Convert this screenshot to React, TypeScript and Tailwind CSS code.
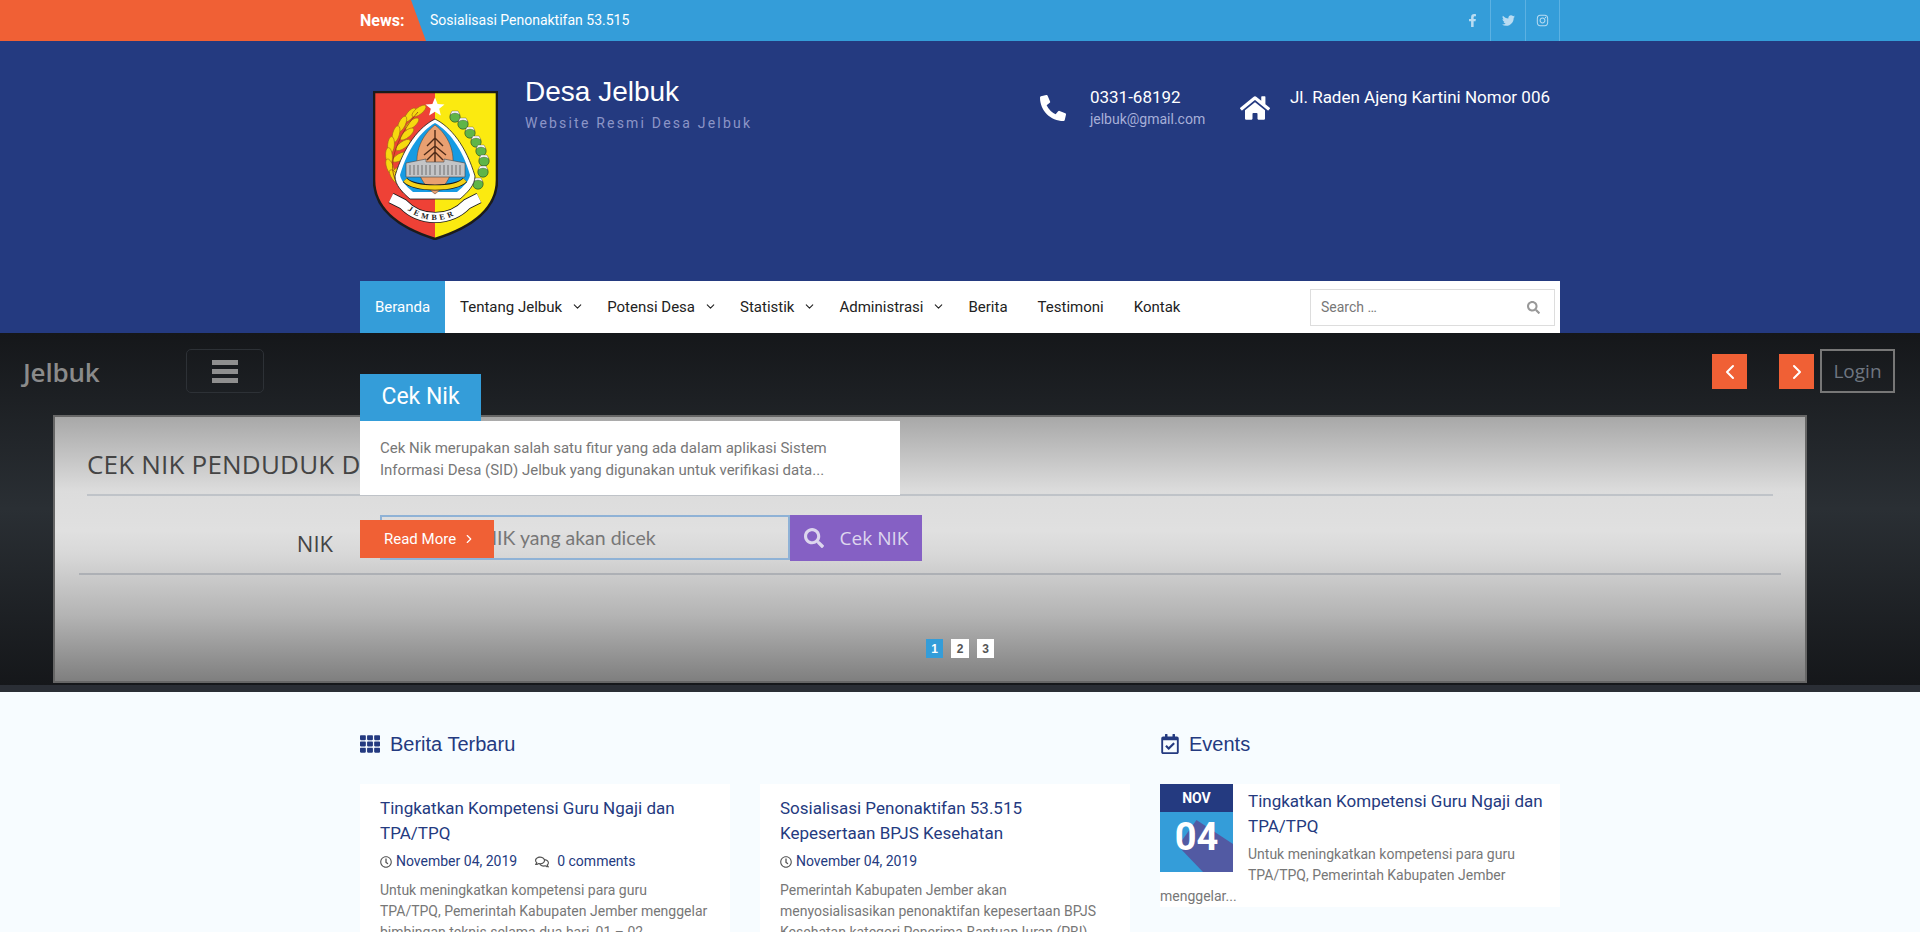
import { FaFacebookF, FaTwitter, FaInstagram, FaPhoneAlt, FaHome, FaTh, FaRegCalendarCheck, FaRegClock, FaRegComments, FaSearch } from "react-icons/fa";
import { FiChevronDown, FiChevronLeft, FiChevronRight } from "react-icons/fi";

const NAV = [
  { label: "Tentang Jelbuk", sub: true },
  { label: "Potensi Desa", sub: true },
  { label: "Statistik", sub: true },
  { label: "Administrasi", sub: true },
  { label: "Berita" },
  { label: "Testimoni" },
  { label: "Kontak" },
];

const POSTS = [
  {
    title: "Tingkatkan Kompetensi Guru Ngaji dan TPA/TPQ",
    comments: true,
    text: "Untuk meningkatkan kompetensi para guru TPA/TPQ, Pemerintah Kabupaten Jember menggelar bimbingan teknis selama dua hari, 01 – 02 November 2019 di Pendopo",
  },
  {
    title: "Sosialisasi Penonaktifan 53.515 Kepesertaan BPJS Kesehatan",
    comments: false,
    text: "Pemerintah Kabupaten Jember akan menyosialisasikan penonaktifan kepesertaan BPJS Kesehatan kategori Penerima Bantuan Iuran (PBI) yang bersumber dari APBD Jember",
  },
];

// lambang kabupaten, digambar kasar mengikuti referensi
function Logo() {
  const wheat = [
    [50, 35, 38], [59, 31, 52], [42, 44, 25], [52, 44, 50], [36, 54, 15], [47, 54, 50],
    [31, 65, 5], [43, 65, 55], [29, 76, -5], [40, 77, 60], [30, 87, -20], [40, 90, 65], [35, 97, -35],
  ];
  const cotton = [[95, 37], [103, 44], [110, 53], [116, 62], [121, 71], [124, 81], [123, 92], [118, 104]];
  return (
    <svg width="125" height="149" viewBox="13 11 125 149" className="shrink-0">
      <path d="M75 12H14V100C14 130 40 148 75 159Z" fill="#ee4136" />
      <path d="M75 12H137V100C137 130 110 148 75 159Z" fill="#fbea10" />
      <path d="M14 12H137V100C137 130 110 148 75 159C40 148 14 130 14 100Z" fill="none" stroke="#1b1b1b" strokeWidth="2.6" />
      <polygon points="75,17.5 77.6,24 84.5,24.4 79.2,28.8 80.9,35.5 75,31.8 69.1,35.5 70.8,28.8 65.5,24.4 72.4,24" fill="#fff" />
      {wheat.map(([x, y, r], i) => (
        <ellipse key={i} cx={x} cy={y} rx="3.4" ry="8.5" transform={`rotate(${r} ${x} ${y})`} fill="#f6d90f" stroke="#a3611a" strokeWidth="0.6" />
      ))}
      <path d="M58 32C42 50 30 75 33 92C35 103 40 108 43 113" fill="none" stroke="#8d3a14" strokeWidth="0.8" />
      {cotton.map(([x, y], i) => (
        <g key={i}>
          <circle cx={x} cy={y} r="5.2" fill="#5fb548" stroke="#24451d" strokeWidth="0.6" />
          <path d={`M${x - 5} ${y - 2}Q${x} ${y - 6} ${x + 5} ${y - 2}L${x + 3} ${y - 6}H${x - 3}Z`} fill="#fff" stroke="#444" strokeWidth="0.4" />
        </g>
      ))}
      <path d="M75 39C91 47 106 66 115 96C115 105 108 112 100 119H50C42 112 35 105 35 96C44 66 59 47 75 39Z" fill="#fff" stroke="#1b1b1b" strokeWidth="0.8" />
      <path d="M75 43C89 51 102 68 110 95C109 101 104 106 97 112H53C46 106 41 101 40 95C48 68 61 51 75 43Z" fill="#169be3" />
      <path d="M75 45C88 55 96 72 92 90C88 104 80 110 75 114C70 110 62 104 58 90C54 72 62 55 75 45Z" fill="#e9a071" stroke="#5a3a22" strokeWidth="0.5" />
      <path d="M75 50V84M75 58L67 66M75 58L83 66M75 66L64 75M75 66L86 75M75 72L67 80M75 72L83 80" stroke="#4d2a18" strokeWidth="1.4" fill="none" />
      <path d="M46 83L66 79V82H84V79L105 83V97H46Z" fill="#c3c4c6" stroke="#444" strokeWidth="0.6" />
      <path d="M50 85V95M54 85V95M58 85V95M62 85V95M66 85V95M70 85V95M75 85V95M80 85V95M84 85V95M88 85V95M92 85V95M96 85V95M100 85V95" stroke="#6e6e70" strokeWidth="1" />
      <path d="M45 100C55 110 95 110 105 100" fill="none" stroke="#1b1b1b" strokeWidth="6" />
      <path d="M45 100C55 110 95 110 105 100" fill="none" stroke="#f3d21a" strokeWidth="4.4" />
      <path d="M31 118L43 124C60 142 90 142 107 124L119 118" fill="none" stroke="#1b1b1b" strokeWidth="11" />
      <path d="M31 118L43 124C60 142 90 142 107 124L119 118" fill="none" stroke="#fff" strokeWidth="9.4" />
      <path id="jalur" d="M45 128C62 144 88 144 105 128" fill="none" />
      <text fontFamily="'Liberation Serif', serif" fontSize="8" fontWeight="700" letterSpacing="3.2" fill="#222">
        <textPath href="#jalur" startOffset="3">JEMBER</textPath>
      </text>
    </svg>
  );
}

export default function App() {
  return (
    <div className="h-screen overflow-hidden bg-[#f7fcff] font-['Roboto',sans-serif] text-[14px] text-[#777]">
      {/* News bar */}
      <div className="relative h-[41px] bg-[#349dd9]">
        <div className="absolute inset-y-0 left-0 w-[426px] bg-[#f06035] [clip-path:polygon(0_0,411px_0,426px_100%,0_100%)]" />
        <div className="relative mx-auto flex h-full w-[1200px] items-center">
          <span className="w-[70px] text-[16px] font-bold text-white">News:</span>
          <span className="text-white">Sosialisasi Penonaktifan 53.515</span>
          <div className="ml-auto flex h-full text-[13px] text-[#b9dcf2]">
            <span className="flex w-[35px] items-center justify-center"><FaFacebookF /></span>
            <span className="flex w-[35px] items-center justify-center border-l border-[#5cb1e2]"><FaTwitter /></span>
            <span className="flex w-[35px] items-center justify-center border-x border-[#5cb1e2]"><FaInstagram /></span>
          </div>
        </div>
      </div>

      {/* Header */}
      <div className="h-[240px] bg-[#243a80]">
        <div className="mx-auto flex w-[1200px] pl-[13px] pt-[50px]">
          <Logo />
          <div className="ml-[27px] -mt-[17px]">
            <h1 className="font-['Liberation_Sans',sans-serif] text-[28px] leading-[36px] text-white">Desa Jelbuk</h1>
            <p className="mt-[3px] text-[14px] leading-[20px] tracking-[2.2px] text-[#8c95c7]">Website Resmi Desa Jelbuk</p>
          </div>
          <div className="ml-auto flex pr-[10px]">
            <FaPhoneAlt className="mt-[4px] size-[26px] text-white" />
            <div className="ml-[24px] -mt-[6px] w-[150px]">
              <p className="text-[17px] leading-[24px] text-white">0331-68192</p>
              <p className="text-[14px] leading-[20px] text-[#a7afd8]">jelbuk@gmail.com</p>
            </div>
            <FaHome className="mt-[2px] size-[30px] text-white" />
            <p className="ml-[20px] -mt-[6px] text-[17px] leading-[24px] text-white">Jl. Raden Ajeng Kartini Nomor 006</p>
          </div>
        </div>
      </div>

      {/* Menu */}
      <div className="bg-[#243a80]">
        <div className="mx-auto flex h-[52px] w-[1200px] items-center bg-white text-[15px] text-[#222]">
          <a className="flex h-full w-[85px] items-center justify-center bg-[#349dd9] text-white">Beranda</a>
          {NAV.map((item) => (
            <a key={item.label} className={`flex items-center pl-[15px] ${item.sub ? "pr-[8px]" : "pr-[15px]"}`}>
              {item.label}
              {item.sub && <FiChevronDown className="ml-[9px] size-[13px] -translate-y-px" />}
            </a>
          ))}
          <div className="ml-auto mr-[5px] flex h-[37px] w-[245px] items-center justify-between border border-[#ddd] pl-[10px] pr-[14px]">
            <span className="text-[14px] text-[#777]">Search …</span>
            <FaSearch className="size-[13px] text-[#999]" />
          </div>
        </div>
      </div>

      {/* Slider */}
      <div className="relative h-[359px] border-b-[7px] border-[#2a2e35] bg-[linear-gradient(180deg,#15171a_0%,#2a2f34_50%,#15171a_100%)]">
        <div className="flex h-[82px] items-start">
          <span className="ml-[23px] mt-[22px] w-[163px] font-['Open_Sans',sans-serif] text-[26px] font-semibold leading-[34px] tracking-[-0.2px] text-[#8b8b8b]">Jelbuk</span>
          <div className="mt-[16px] flex h-[44px] w-[78px] flex-col items-center justify-center gap-[4px] rounded-[5px] border border-[#2d3136]">
            <span className="h-[5px] w-[26px] bg-[#8f8f8f]" />
            <span className="h-[5px] w-[26px] bg-[#8f8f8f]" />
            <span className="h-[5px] w-[26px] bg-[#8f8f8f]" />
          </div>
          <div className="ml-auto mr-[25px] mt-[16px] flex h-[44px] w-[75px] items-center justify-center border-2 border-[#777] font-['Open_Sans',sans-serif] text-[19px] text-[#6f7680]">Login</div>
        </div>

        <div className="ml-[53px] h-[268px] w-[1754px] border-2 border-[#666] bg-[linear-gradient(180deg,#a8a8a8_0%,#dcdcdc_28%,#e0e0e0_43%,#d8d8d8_52%,#b4b4b4_75%,#7f7f7f_100%)]">
          <h2 className="mx-[32px] border-b-2 border-[#bfc3c8] pb-[12px] pt-[29px] font-['Open_Sans',sans-serif] text-[26px] leading-[36px] tracking-[0.2px] text-[#444]">CEK NIK PENDUDUK DESA JELBUK</h2>
          <div className="mx-[24px] flex h-[79px] items-start border-b-2 border-[#adb0b5] pt-[19px]">
            <span className="mt-[13px] w-[254px] text-right font-['Open_Sans',sans-serif] text-[22px] leading-[30px] text-[#444]">NIK</span>
            <div className="ml-[47px] flex h-[45px] w-[410px] items-center border-2 border-[#8fb2d6] pl-[8px] font-['Lato',sans-serif] text-[19.5px] text-[#777]">Masukkan NIK yang akan dicek</div>
            <div className="flex h-[46px] w-[132px] items-center justify-center gap-[16px] bg-[#8560c4] font-['Open_Sans',sans-serif] text-[19px] text-[#ddd6ee]">
              <FaSearch className="size-[20px]" />
              Cek NIK
            </div>
          </div>
        </div>

        {/* arrows */}
        <span className="absolute left-[1712px] top-[21px] flex size-[35px] items-center justify-center bg-[#f06035] text-white"><FiChevronLeft className="size-[24px]" /></span>
        <span className="absolute left-[1779px] top-[21px] flex size-[35px] items-center justify-center bg-[#f06035] text-white"><FiChevronRight className="size-[24px]" /></span>

        {/* caption */}
        <div className="absolute left-[360px] top-[41px] w-[540px]">
          <h3 className="flex h-[47px] w-[121px] items-center justify-center bg-[#349dd9] text-[23px] text-white">Cek Nik</h3>
          <p className="h-[74px] bg-white px-[20px] pt-[16px] text-[15px] leading-[22px] text-[#777]">
            Cek Nik merupakan salah satu fitur yang ada dalam aplikasi Sistem Informasi Desa (SID) Jelbuk yang digunakan untuk verifikasi data...
          </p>
          <a className="mt-[25px] flex h-[38px] w-[134px] items-center gap-[6px] bg-[#f06035] pl-[24px] text-[15px] text-white">
            Read More
            <FiChevronRight className="size-[14px]" />
          </a>
        </div>

        {/* pager */}
        <div className="absolute left-[926px] top-[306px] flex gap-[8px] font-['Liberation_Sans',sans-serif] text-[12px] font-bold text-[#555]">
          <span className="flex h-[19px] w-[17px] items-center justify-center bg-[#349dd9] text-white">1</span>
          <span className="flex h-[19px] w-[18px] items-center justify-center bg-white">2</span>
          <span className="flex h-[19px] w-[17px] items-center justify-center bg-white">3</span>
        </div>
      </div>

      {/* Content */}
      <div className="mx-auto flex w-[1200px] gap-[30px] pt-[39px]">
        <div className="w-[770px]">
          <h2 className="mb-[27px] flex items-center gap-[10px] font-['Liberation_Sans',sans-serif] text-[20px] leading-[26px] text-[#243a80]">
            <FaTh className="size-[20px]" />
            Berita Terbaru
          </h2>
          <div className="grid grid-cols-2 gap-[30px]">
            {POSTS.map((post) => (
              <div key={post.title} className="bg-white px-[20px] pt-[12px] pb-[20px]">
                <h3 className="text-[17px] leading-[25px] text-[#243a80]">{post.title}</h3>
                <div className="mt-[5px] flex items-center text-[14px] leading-[21px] text-[#243a80]">
                  <FaRegClock className="mr-[4px] size-[12px] text-[#555]" />
                  November 04, 2019
                  {post.comments && (
                    <>
                      <FaRegComments className="ml-[18px] mr-[8px] size-[14px] text-[#555]" />
                      0 comments
                    </>
                  )}
                </div>
                <p className="mt-[8px] text-[14px] leading-[21px] text-[#777]">{post.text}</p>
              </div>
            ))}
          </div>
        </div>

        <div className="w-[400px]">
          <h2 className="mb-[27px] flex items-center gap-[9px] font-['Liberation_Sans',sans-serif] text-[20px] leading-[26px] text-[#243a80]">
            <FaRegCalendarCheck className="size-[20px]" />
            Events
          </h2>
          <div className="h-[123px] bg-white">
            <div className="float-left mr-[15px] w-[73px]">
              <div className="flex h-[28px] items-center justify-center bg-[#243a80] text-[14px] font-bold text-white">NOV</div>
              <div className="relative h-[60px] overflow-hidden bg-[#349dd9]">
                <div className="absolute inset-0 bg-[#525aa3] [clip-path:polygon(50%_8px,100%_32px,100%_100%,43px_100%,18px_34px)]" />
                <span className="relative flex h-[50px] items-center justify-center text-[38px] font-bold text-white">04</span>
              </div>
            </div>
            <h3 className="pt-[5px] text-[17px] leading-[25px] text-[#243a80]">Tingkatkan Kompetensi Guru Ngaji dan TPA/TPQ</h3>
            <p className="mt-[5px] text-[14px] leading-[21px] text-[#777]">
              Untuk meningkatkan kompetensi para guru TPA/TPQ, Pemerintah Kabupaten Jember menggelar...
            </p>
          </div>
        </div>
      </div>
    </div>
  );
}
